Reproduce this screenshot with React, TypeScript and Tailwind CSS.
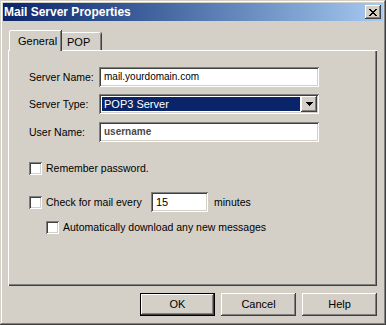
import React from "react";

const SUNKEN = "shadow-[inset_1px_1px_0_#808080,inset_-1px_-1px_0_#ffffff,inset_2px_2px_0_#404040,inset_-2px_-2px_0_#d4d0c8]";
const RAISED = "shadow-[inset_-1px_-1px_0_#404040,inset_1px_1px_0_#ffffff,inset_-2px_-2px_0_#808080]";

const TextBox = ({ value, className = "", muted = false }: { value: string; className?: string; muted?: boolean }) => (
  <div className={`${SUNKEN} bg-white h-[20px] flex items-center pl-[5px] ${muted ? "text-[#4a4a4a]" : "text-black"} ${className}`}>
    {value}
  </div>
);

const CheckBox = () => <div className={`${SUNKEN} bg-white w-[13px] h-[13px] shrink-0`} />;

const Button = ({ label, isDefault = false }: { label: string; isDefault?: boolean }) => (
  <div className={`w-[75px] h-[23px] ${isDefault ? "border border-black" : ""}`}>
    <div className={`${RAISED} w-full h-full flex items-center justify-center text-black text-[11px]`}>{label}</div>
  </div>
);

export default function App() {
  return (
    <div
      className="w-[386px] h-[325px] bg-[#d4d0c8] p-[3px] flex flex-col text-[10.5px] leading-none shadow-[inset_-1px_-1px_0_#404040,inset_1px_1px_0_#d4d0c8,inset_-2px_-2px_0_#808080,inset_2px_2px_0_#ffffff]"
      style={{ fontFamily: '"Liberation Sans", Arial, sans-serif' }}
    >
      {/* title bar */}
      <div className="h-[18px] flex items-center justify-between bg-linear-to-r from-[#0a246a] to-[#a6caf0] pl-[1px]">
        <span className="text-white font-bold text-[12px]">Mail Server Properties</span>
        <div className={`${RAISED} bg-[#d4d0c8] w-[16px] h-[14px] mr-[2px] flex items-center justify-center`}>
          <svg width="8" height="7" viewBox="0 0 8 7" shapeRendering="crispEdges">
            <path d="M0 0h2v1h-2zM6 0h2v1h-2zM1 1h2v1h-2zM5 1h2v1h-2zM2 2h4v1h-4zM3 3h2v1h-2zM2 4h4v1h-4zM1 5h2v1h-2zM5 5h2v1h-2zM0 6h2v1h-2zM6 6h2v1h-2z" fill="#000" />
          </svg>
        </div>
      </div>

      {/* tabs */}
      <div className="ml-[5px] w-[369px] mt-[9px] h-[20px] flex items-end pl-[1px]">
        <div className="relative z-10 h-[21px] -mb-[1px] w-[52px] bg-[#d4d0c8] border-l border-t border-white rounded-tl-[2px] shadow-[inset_-1px_0_0_#808080,1px_0_0_#404040] flex items-start pt-[5px] pl-[8px] text-black text-[11px]">
          General
        </div>
        <div className="h-[18px] w-[40px] border-t border-white rounded-tr-[2px] shadow-[inset_-1px_0_0_#808080,1px_0_0_#404040] flex items-start pt-[4px] pl-[6px] text-black text-[11px]">
          POP
        </div>
      </div>

      {/* panel */}
      <div className="ml-[5px] w-[369px] h-[236px] border-l border-t border-white shadow-[inset_-1px_-1px_0_#404040,inset_-2px_-2px_0_#808080] flex flex-col pl-[20px] pt-[16px] text-black">
        <div className="flex items-center h-[20px]">
          <span className="w-[70px]">Server Name:</span>
          <TextBox value="mail.yourdomain.com" className="w-[220px] text-[10px]" />
        </div>
        <div className="flex items-center h-[20px] mt-[7px]">
          <span className="w-[70px]">Server Type:</span>
          <div className={`${SUNKEN} w-[220px] h-[20px] p-[2px] flex bg-white`}>
            <div className="flex-1 p-[1px] bg-white">
              <div className="h-full bg-[#0a246a] text-white flex items-center pl-[2px] text-[11px]">POP3 Server</div>
            </div>
            <div className={`${RAISED} bg-[#d4d0c8] w-[16px] h-[16px] flex items-center justify-center`}>
              <svg width="7" height="4" viewBox="0 0 7 4" shapeRendering="crispEdges">
                <path d="M0 0h7v1h-7zM1 1h5v1h-5zM2 2h3v1h-3zM3 3h1v1h-1z" fill="#000" />
              </svg>
            </div>
          </div>
        </div>
        <div className="flex items-center h-[20px] mt-[8px]">
          <span className="w-[70px]">User Name:</span>
          <TextBox value="username" className="w-[220px] text-[10px] font-bold" muted />
        </div>

        <div className="flex items-center h-[13px] mt-[20px] gap-[4px]">
          <CheckBox />
          <span>Remember password.</span>
        </div>

        <div className="flex items-center h-[20px] mt-[17px]">
          <CheckBox />
          <span className="w-[109px] pl-[4px]">Check for mail every</span>
          <TextBox value="15" className="w-[57px] text-[11px] pl-[3px]" />
          <span className="ml-[6px]">minutes</span>
        </div>

        <div className="flex items-center h-[13px] mt-[9px] ml-[17px] gap-[4px]">
          <CheckBox />
          <span>Automatically download any new messages</span>
        </div>
      </div>

      {/* buttons */}
      <div className="ml-[5px] w-[369px] mt-[7px] flex justify-end gap-[6px]">
        <Button label="OK" isDefault />
        <Button label="Cancel" />
        <Button label="Help" />
      </div>
    </div>
  );
}
